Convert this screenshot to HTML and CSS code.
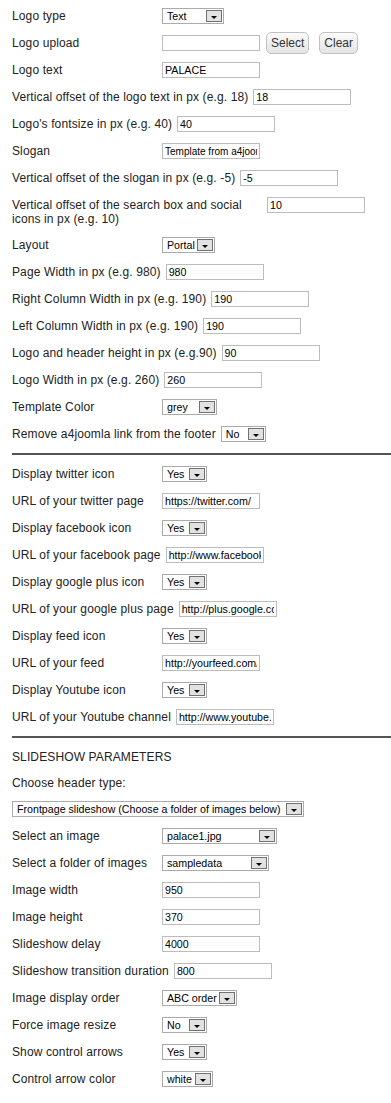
FILE: index.html
```html
<!DOCTYPE html>
<html lang="en">
<head>
  <meta charset="UTF-8">
  <title>Template parameters</title>
  <link rel="stylesheet" href="styles.css">
</head>
<body>

  <div class="row">
    <label>Logo type</label>
    <span class="sel sel-type"><span class="val">Text</span><span class="btn"></span></span>
  </div>
  <div class="row">
    <label>Logo upload</label>
    <input class="txt" type="text" value="">
    <button class="pill pill-first">Select</button>
    <button class="pill">Clear</button>
  </div>
  <div class="row">
    <label>Logo text</label>
    <input class="txt" type="text" value="PALACE">
  </div>
  <div class="row">
    <label>Vertical offset of the logo text in px (e.g. 18)</label>
    <input class="txt" type="text" value="18">
  </div>
  <div class="row">
    <label>Logo's fontsize in px (e.g. 40)</label>
    <input class="txt" type="text" value="40">
  </div>
  <div class="row">
    <label>Slogan</label>
    <input class="txt txt-small" type="text" value="Template from a4joomla.com">
  </div>
  <div class="row">
    <label>Vertical offset of the slogan in px (e.g. -5)</label>
    <input class="txt" type="text" value="-5">
  </div>
  <div class="row">
    <label>Vertical offset of the search box and social icons in px (e.g. 10)</label>
    <input class="txt" type="text" value="10">
  </div>
  <div class="row">
    <label>Layout</label>
    <span class="sel sel-layout"><span class="val">Portal</span><span class="btn"></span></span>
  </div>
  <div class="row">
    <label>Page Width in px (e.g. 980)</label>
    <input class="txt" type="text" value="980">
  </div>
  <div class="row">
    <label>Right Column Width in px (e.g. 190)</label>
    <input class="txt" type="text" value="190">
  </div>
  <div class="row">
    <label>Left Column Width in px (e.g. 190)</label>
    <input class="txt" type="text" value="190">
  </div>
  <div class="row">
    <label>Logo and header height in px (e.g.90)</label>
    <input class="txt" type="text" value="90">
  </div>
  <div class="row">
    <label>Logo Width in px (e.g. 260)</label>
    <input class="txt" type="text" value="260">
  </div>
  <div class="row">
    <label>Template Color</label>
    <span class="sel sel-color"><span class="val">grey</span><span class="btn"></span></span>
  </div>
  <div class="row">
    <label>Remove a4joomla link from the footer</label>
    <span class="sel sel-yn"><span class="val">No</span><span class="btn"></span></span>
  </div>

  <div class="sep"></div>

  <div class="row">
    <label>Display twitter icon</label>
    <span class="sel sel-yn"><span class="val">Yes</span><span class="btn"></span></span>
  </div>
  <div class="row">
    <label>URL of your twitter page</label>
    <input class="txt" type="text" value="https://twitter.com/">
  </div>
  <div class="row">
    <label>Display facebook icon</label>
    <span class="sel sel-yn"><span class="val">Yes</span><span class="btn"></span></span>
  </div>
  <div class="row">
    <label>URL of your facebook page</label>
    <input class="txt" type="text" value="http://www.facebook.com/">
  </div>
  <div class="row">
    <label>Display google plus icon</label>
    <span class="sel sel-yn"><span class="val">Yes</span><span class="btn"></span></span>
  </div>
  <div class="row">
    <label>URL of your google plus page</label>
    <input class="txt" type="text" value="http://plus.google.com/">
  </div>
  <div class="row">
    <label>Display feed icon</label>
    <span class="sel sel-yn"><span class="val">Yes</span><span class="btn"></span></span>
  </div>
  <div class="row">
    <label>URL of your feed</label>
    <input class="txt" type="text" value="http://yourfeed.com/">
  </div>
  <div class="row">
    <label>Display Youtube icon</label>
    <span class="sel sel-yn"><span class="val">Yes</span><span class="btn"></span></span>
  </div>
  <div class="row">
    <label>URL of your Youtube channel</label>
    <input class="txt" type="text" value="http://www.youtube.com/">
  </div>

  <div class="sep"></div>

  <div class="row">
    <label class="wide">SLIDESHOW PARAMETERS</label>
  </div>
  <div class="row">
    <label class="wide">Choose header type:</label>
  </div>
  <div class="row">
    <span class="sel sel-header"><span class="val">Frontpage slideshow (Choose a folder of images below)</span><span class="btn"></span></span>
  </div>
  <div class="row">
    <label>Select an image</label>
    <span class="sel sel-image"><span class="val">palace1.jpg</span><span class="btn"></span></span>
  </div>
  <div class="row">
    <label>Select a folder of images</label>
    <span class="sel sel-folder"><span class="val">sampledata</span><span class="btn"></span></span>
  </div>
  <div class="row">
    <label>Image width</label>
    <input class="txt" type="text" value="950">
  </div>
  <div class="row">
    <label>Image height</label>
    <input class="txt" type="text" value="370">
  </div>
  <div class="row">
    <label>Slideshow delay</label>
    <input class="txt" type="text" value="4000">
  </div>
  <div class="row">
    <label>Slideshow transition duration</label>
    <input class="txt" type="text" value="800">
  </div>
  <div class="row">
    <label>Image display order</label>
    <span class="sel sel-order"><span class="val">ABC order</span><span class="btn"></span></span>
  </div>
  <div class="row">
    <label>Force image resize</label>
    <span class="sel sel-yn"><span class="val">No</span><span class="btn"></span></span>
  </div>
  <div class="row">
    <label>Show control arrows</label>
    <span class="sel sel-yn"><span class="val">Yes</span><span class="btn"></span></span>
  </div>
  <div class="row">
    <label>Control arrow color</label>
    <span class="sel sel-arrow"><span class="val">white</span><span class="btn"></span></span>
  </div>

</body>
</html>
```

FILE: styles.css
```css
body {
  margin: 0;
  padding: 8px 0 0 12px;
  background: #fff;
  color: #222;
  font-family: "Liberation Sans", Arial, sans-serif;
  font-size: 12px;
}

.row {
  display: flex;
  align-items: flex-start;
  margin-bottom: 11px;
}

label {
  flex: none;
  min-width: 145px;
  max-width: 250px;
  margin-right: 5px;
  padding-top: 1px;
  line-height: 14px;
  letter-spacing: 0.12px;
}

label.wide {
  max-width: none;
}

.txt {
  box-sizing: border-box;
  width: 98px;
  height: 16px;
  margin: 0;
  padding: 0 2px;
  border: 1px solid #bcbcbc;
  background: #fff;
  color: #000;
  font-family: "Liberation Sans", Arial, sans-serif;
  font-size: 10.67px;
  outline: none;
}

.txt-small {
  font-size: 10px;
}

.pill {
  height: 22px;
  margin: -3px 0 -3px 10px;
  padding: 0 4px;
  border: 1px solid #c2c2c2;
  border-radius: 5px;
  background: linear-gradient(#fbfbfb, #e4e4e4);
  color: #333;
  font-family: "Liberation Sans", Arial, sans-serif;
  font-size: 12px;
}

.pill-first {
  margin-left: 6px;
}

/* fake windows-style select boxes */
.sel {
  display: inline-flex;
  box-sizing: border-box;
  height: 16px;
  padding: 1px;
  border: 1px solid #ababab;
  background: #fff;
  color: #000;
  font-size: 10.67px;
}

.sel .val {
  flex: 1;
  padding-left: 3px;
  line-height: 13px;
  white-space: nowrap;
  overflow: hidden;
}

.sel .btn {
  display: flex;
  flex: none;
  justify-content: center;
  align-items: center;
  box-sizing: border-box;
  width: 16px;
  border: 1px solid #717171;
  background: #e2e2e2;
}

.sel .btn::after {
  content: "";
  margin-top: 2px;
  border-left: 3px solid transparent;
  border-right: 3px solid transparent;
  border-top: 3px solid #000;
}

.sel-type { width: 62px; }
.sel-layout { width: 53px; }
.sel-color { width: 55px; }
.sel-yn { width: 45px; }
.sel-header { width: 292px; }
.sel-image { width: 115px; }
.sel-folder { width: 107px; }
.sel-order { width: 75px; }
.sel-arrow { width: 51px; }

.sep {
  height: 2px;
  margin-bottom: 11px;
  background: #555;
}
```
